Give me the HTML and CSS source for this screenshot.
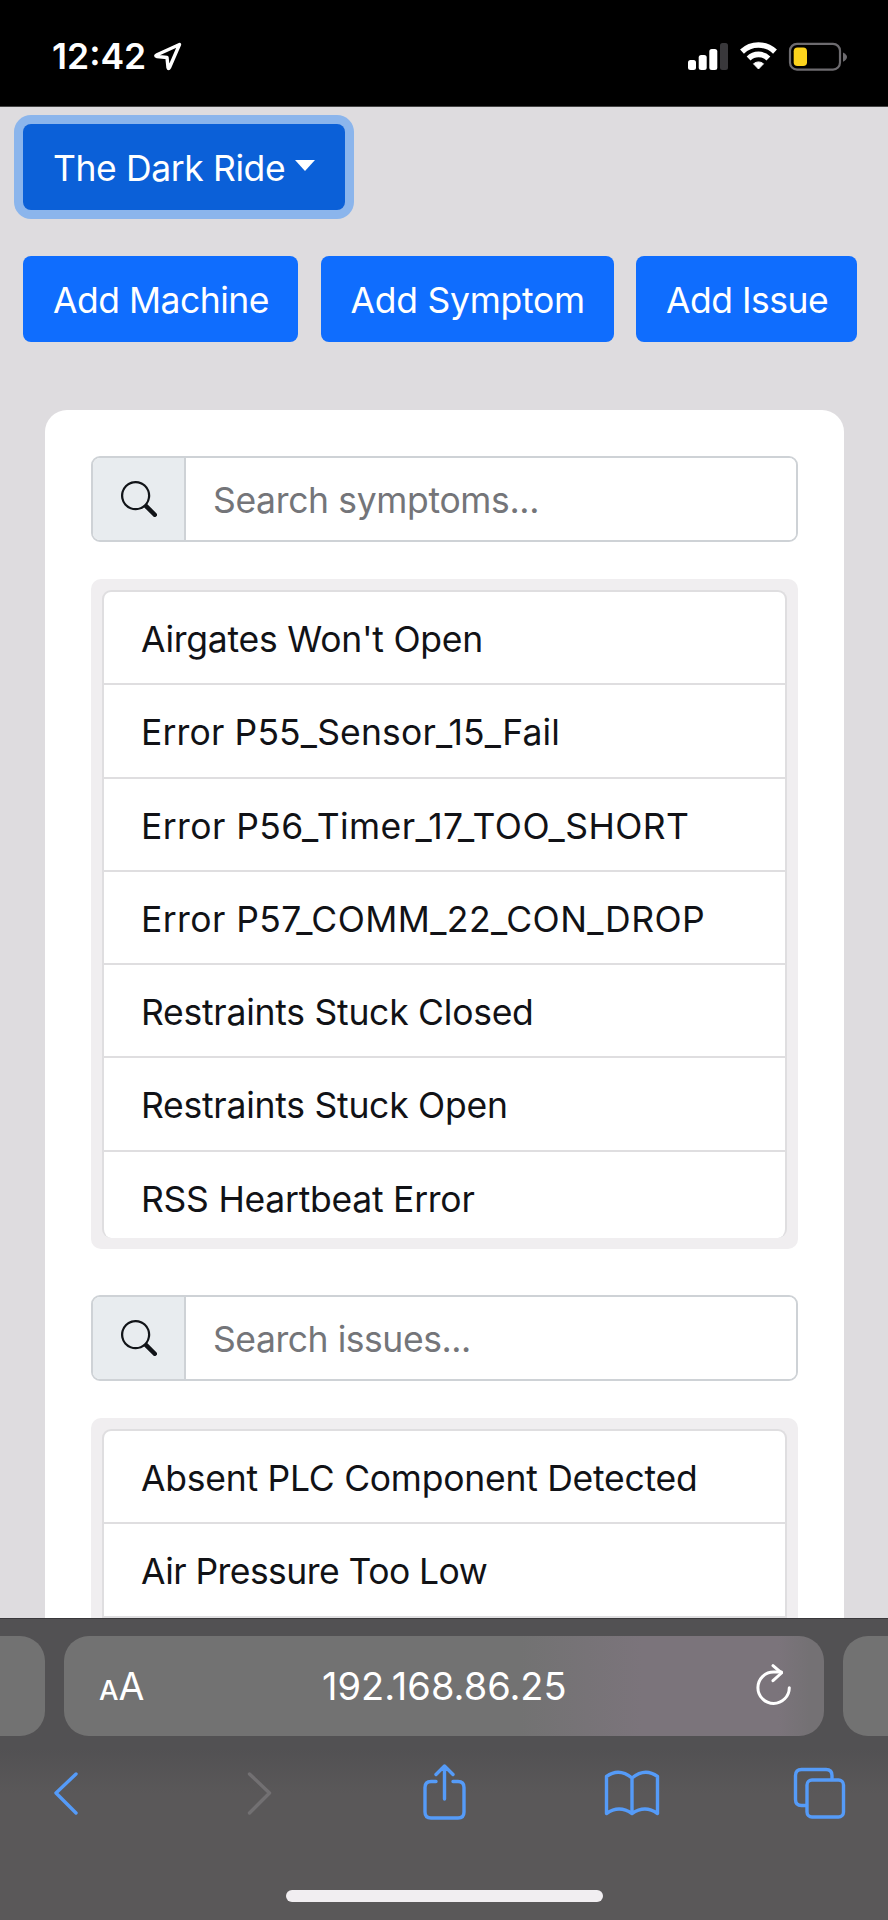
FILE: index.html
```html
<!DOCTYPE html>
<html lang="en">
<head>
  <meta charset="UTF-8">
  <title>The Dark Ride</title>
  <link rel="stylesheet" href="styles.css">
</head>
<body>

  <div class="status-bar">
    <div class="clock">
      <span class="time">12:42</span>
      <svg class="location" width="30" height="30" viewBox="0 0 30 30">
        <path d="M26.500 3.500L16.500 26.500Q15.500 28.500 15 26.500L14 16.500L4 15.500Q1.500 15 4 13.700Z" fill="none" stroke="#fff" stroke-width="3.400" stroke-linejoin="round"/>
      </svg>
    </div>
    <svg class="indicators" width="164" height="32" viewBox="0 0 164 32">
      <rect x="0" y="19" width="8" height="10" rx="2.500" fill="#fff"/>
      <rect x="10.700" y="14" width="8" height="15" rx="2.500" fill="#fff"/>
      <rect x="21.300" y="8" width="8" height="21" rx="2.500" fill="#fff"/>
      <rect x="32" y="2" width="8" height="27" rx="2.500" fill="#39383b"/>
      <g fill="none" stroke="#fff" stroke-width="5.600">
        <path d="M54 10.600A24 24 0 0 1 87 10.600"/>
        <path d="M60.600 17.400A14.300 14.300 0 0 1 80.400 17.400"/>
      </g>
      <path d="M70.500 28L65.500 22.800Q70.500 19 75.500 22.800Z" fill="#fff" stroke="#fff" stroke-width="1" stroke-linejoin="round"/>
      <rect x="102" y="2.800" width="50" height="25.800" rx="7" fill="none" stroke="#6d6b6f" stroke-width="2.200"/>
      <rect x="105.700" y="6.500" width="13.300" height="18.500" rx="3.800" fill="#fcd31c"/>
      <path d="M155 11.500Q159 13.500 159 16Q159 18.700 155 20.700Z" fill="#6d6b6f"/>
    </svg>
  </div>

  <main class="page">
    <button class="btn btn-machine active">The Dark Ride<span class="caret"></span></button>

    <div class="btn-row">
      <button class="btn add-machine">Add Machine</button>
      <button class="btn add-symptom">Add Symptom</button>
      <button class="btn add-issue">Add Issue</button>
    </div>

    <div class="card">
      <div class="search">
        <span class="search-icon">
          <svg width="36" height="36" viewBox="0 0 16 16" fill="#111418">
            <path d="M11.742 10.344a6.500 6.500 0 1 0-1.397 1.398h-.001c.03.04.062.078.098.115l3.850 3.850a1 1 0 0 0 1.415-1.414l-3.850-3.850a1.007 1.007 0 0 0-.115-.1zM12 6.500a5.500 5.500 0 1 1-11 0 5.500 5.500 0 0 1 11 0z"/>
          </svg>
        </span>
        <input type="text" class="search-symptoms" placeholder="Search symptoms...">
      </div>
      <div class="list-box symptoms">
        <ul>
          <li>Airgates Won't Open</li>
          <li class="code">Error P55_Sensor_15_Fail</li>
          <li class="code wide">Error P56_Timer_17_TOO_SHORT</li>
          <li class="code wide">Error P57_COMM_22_CON_DROP</li>
          <li>Restraints Stuck Closed</li>
          <li>Restraints Stuck Open</li>
          <li>RSS Heartbeat Error</li>
        </ul>
      </div>

      <div class="search">
        <span class="search-icon">
          <svg width="36" height="36" viewBox="0 0 16 16" fill="#111418">
            <path d="M11.742 10.344a6.500 6.500 0 1 0-1.397 1.398h-.001c.03.04.062.078.098.115l3.850 3.850a1 1 0 0 0 1.415-1.414l-3.850-3.850a1.007 1.007 0 0 0-.115-.1zM12 6.500a5.500 5.500 0 1 1-11 0 5.500 5.500 0 0 1 11 0z"/>
          </svg>
        </span>
        <input type="text" class="search-issues" placeholder="Search issues...">
      </div>
      <div class="list-box issues">
        <ul>
          <li>Absent PLC Component Detected</li>
          <li class="tight">Air Pressure Too Low</li>
          <li></li>
        </ul>
      </div>
    </div>
  </main>

  <footer class="browser-bar">
    <div class="tabs">
      <div class="tab side-left"></div>
      <div class="tab address">
        <span class="text-size"><small>A</small>A</span>
        <span class="url">192.168.86.25</span>
        <svg class="reload" width="40" height="44" viewBox="0 0 40 44" fill="none" stroke="#fff" stroke-width="3" stroke-linecap="round" stroke-linejoin="round">
          <path d="M35.300 23.700A15.700 15.700 0 1 1 19.600 8H27.500"/>
          <path d="M19 1.700L27.500 9L19 16.700"/>
        </svg>
      </div>
      <div class="tab side-right"></div>
    </div>
    <svg class="tools" width="888" height="80" viewBox="0 0 888 80" fill="none" stroke="#559bf8" stroke-width="3.400" stroke-linecap="round" stroke-linejoin="round">
      <path d="M76 19L56 38L76 58"/>
      <path d="M249.500 19L269.500 38L249.500 58" stroke="#727072"/>
      <path d="M436 26.500H431Q425 26.500 425 32.500V57Q425 63 431 63H458Q464 63 464 57V32.500Q464 26.500 458 26.500H453M444.500 44V11M436 19.500L444.500 11L453 19.500"/>
      <path d="M632 23Q619 12.500 606.500 21.500V58.500Q619 49.500 632 58.500Q645 49.500 657.500 58.500V21.500Q645 12.500 632 23ZM632 23V58.500"/>
      <rect x="807" y="25" width="36.500" height="37" rx="5"/>
      <path d="M806.500 50.500H801.500Q795.500 50.500 795.500 44.500V20.500Q795.500 14.500 801.500 14.500H826Q832 14.500 832 20.500V24.500"/>
    </svg>
    <div class="home-indicator"></div>
  </footer>

</body>
</html>
```

FILE: styles.css
```css
* {
  box-sizing: border-box;
}

body {
  font-family: Inter, "Liberation Sans", sans-serif;
  font-size: 35.5px;
  color: #111216;
  background: #dedcdf;
  margin: 0;
  height: 1920px;
  display: flex;
  flex-direction: column;
  overflow: hidden;
}

.status-bar {
  flex: none;
  height: 107px;
  background: #000;
  border-bottom: 1px solid #444;
  display: flex;
  justify-content: space-between;
  padding: 41px 36px 0 52px;
}

.clock {
  display: flex;
  color: white;
  font-weight: 600;
  line-height: 32px;
}

.time {
  width: 101px;
}

.page {
  flex: 1;
  min-height: 0;
  overflow: hidden;
  padding: 17px 23px 0;
}

.btn {
  display: block;
  height: 86px;
  padding: 2px 0 0 30px;
  border: none;
  border-radius: 8px;
  background: #0f6dfe;
  color: white;
  font: inherit;
  letter-spacing: -0.5px;
  text-align: left;
  white-space: nowrap;
}

.btn-machine {
  width: 322px;
  letter-spacing: -0.4px;
}

.btn.active {
  background: #0b60d8;
  box-shadow: 0 0 0 9px #8bb5ec;
}

.caret {
  display: inline-block;
  margin-left: 10px;
  vertical-align: 10px;
  border-top: 11px solid white;
  border-left: 10.5px solid transparent;
  border-right: 10.5px solid transparent;
}

.btn-row {
  display: flex;
  gap: 22.5px;
  margin-top: 46px;
}

.add-machine {
  width: 275px;
}

.add-symptom {
  width: 293px;
  letter-spacing: -0.25px;
}

.add-issue {
  width: 221px;
}

.card {
  margin: 68px 21px 0 22px;
  padding: 46px 46px 0;
  background: white;
  border-radius: 22px 22px 0 0;
}

.search {
  display: flex;
  height: 86px;
  border: 2px solid #ced2d6;
  border-radius: 9px;
  overflow: hidden;
}

.search-icon {
  width: 93px;
  background: #e8ecef;
  border-right: 2px solid #ced2d6;
  display: flex;
  align-items: center;
  justify-content: center;
}

.search input {
  flex: 1;
  min-width: 0;
  border: none;
  padding: 2px 0 0 27px;
  font: inherit;
  letter-spacing: -0.35px;
  background: white;
}

.search .search-issues {
  letter-spacing: -0.45px;
}

.search input::placeholder {
  color: #747579;
}

.list-box {
  background: #f0eef0;
  border-radius: 10px;
  padding: 11px;
}

.symptoms {
  height: 670px;
  margin: 37px 0 46px;
}

.issues {
  height: 400px;
  margin-top: 37px;
}

.list-box ul {
  list-style: none;
  margin: 0;
  padding: 0;
  height: 100%;
  overflow: hidden;
  background: white;
  border: 2px solid #dfdee0;
  border-bottom: none;
  border-radius: 9px;
}

.list-box li {
  height: 93.3px;
  padding-left: 37px;
  line-height: 95px;
  letter-spacing: -0.25px;
  white-space: nowrap;
  border-bottom: 2px solid #dfdee0;
}

.list-box .code {
  letter-spacing: 0.15px;
}

.list-box .wide {
  letter-spacing: 0.42px;
}

.list-box .tight {
  letter-spacing: -0.55px;
}

.symptoms li:last-child {
  border-bottom: none;
}

.browser-bar {
  flex: none;
  height: 302px;
  background: linear-gradient(#525153 0, #525153 130px, #5a5859 175px);
  border-top: 1px solid #39383b;
  padding-top: 17px;
}

.tabs {
  display: flex;
  gap: 19px;
}

.tab {
  height: 100px;
  background: #727272;
  border-radius: 25px;
}

.side-left {
  width: 45px;
  border-radius: 0 25px 25px 0;
}

.side-right {
  width: 45px;
  border-radius: 25px 0 0 25px;
}

.address {
  width: 760px;
  background: linear-gradient(90deg, #727272 60%, #7b747b 76%, #7b747b 94%, #747174 98%);
  display: flex;
  align-items: center;
  padding: 0 30px 0 35px;
  color: white;
}

.text-size {
  width: 223px;
  font-size: 37.5px;
}

.text-size small {
  font-size: 27.5px;
  font-weight: 500;
}

.url {
  font-size: 38px;
}

.reload {
  margin-left: auto;
}

.tools {
  display: block;
  margin-top: 19px;
}

.home-indicator {
  width: 317px;
  height: 12px;
  margin: 55px auto 0;
  background: #f1eef1;
  border-radius: 6px;
}
```
